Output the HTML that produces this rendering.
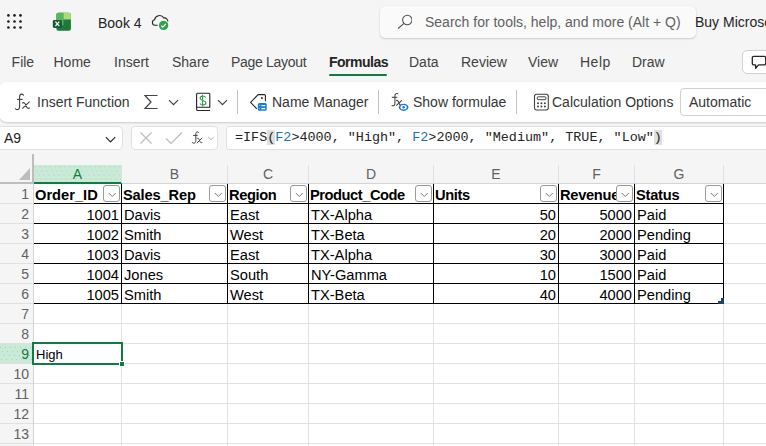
<!DOCTYPE html>
<html><head><meta charset="utf-8">
<style>
*{box-sizing:border-box;margin:0;padding:0}
html,body{width:766px;height:446px;overflow:hidden;background:#f5f5f5;font-family:"Liberation Sans",sans-serif;color:#242424}
.a{position:absolute;white-space:nowrap}
.t14{font-size:14px}
.tab{position:absolute;top:54.4px;font-size:14px;color:#424242;line-height:16px}
.rib{position:absolute;left:-1px;top:82px;width:800px;height:40px;background:#fff;border-radius:8px;box-shadow:0 1px 2px rgba(0,0,0,0.18)}
.rl{position:absolute;top:94.3px;font-size:14px;color:#363636;line-height:16px}
.sep{position:absolute;top:90px;width:1px;height:24px;background:#c2c2c2}
.box{position:absolute;background:#fff;border:1px solid #e0e0e0;border-radius:4px}
.hdr{position:absolute;top:165px;height:18px;font-size:14px;color:#616161;text-align:center;line-height:18px}
.rh{position:absolute;left:0;width:29px;height:20px;font-size:14px;color:#616161;text-align:right;line-height:20px}
.c{position:absolute;height:20px;font-size:14.67px;line-height:20px;color:#000;padding:0 3px}
.b{font-weight:bold}
.dots{background:#caead8}
.r{text-align:right}
.fb{position:absolute;width:17px;height:17px;border:1px solid #9a9a9a;border-radius:3px;background:#fff}
.fb svg{position:absolute;left:3.5px;top:5.5px}
</style></head><body>

<!-- top bar -->
<svg class="a" style="left:6px;top:13px" width="18" height="18" viewBox="0 0 18 18">
<g fill="#1a1a1a"><circle cx="2.4" cy="2.4" r="1.3"/><circle cx="8.5" cy="2.4" r="1.3"/><circle cx="14.5" cy="2.4" r="1.3"/>
<circle cx="2.4" cy="8.5" r="1.3"/><circle cx="8.5" cy="8.5" r="1.3"/><circle cx="14.5" cy="8.5" r="1.3"/>
<circle cx="2.4" cy="14.5" r="1.3"/><circle cx="8.5" cy="14.5" r="1.3"/><circle cx="14.5" cy="14.5" r="1.3"/></g></svg>

<svg class="a" style="left:52px;top:12px" width="20" height="20" viewBox="0 0 20 20">
<rect x="4.4" y="0.8" width="14.5" height="18" rx="2" fill="#1e7a3c"/>
<path d="M6.4 0.8h5v12.5h-7v-10.5a2 2 0 0 1 2-2z" fill="#55b85a"/>
<path d="M11.4 0.8h5.5a2 2 0 0 1 2 2v4.7h-7.5z" fill="#a8dd7c"/>
<rect x="0.8" y="7.9" width="9.2" height="8" rx="1.3" fill="#125e32"/>
<path d="M3.4 9.7l3.9 4.4M7.3 9.7l-3.9 4.4" stroke="#fff" stroke-width="1.2"/>
</svg>

<div class="a" style="left:98px;top:15px;font-size:14px;line-height:16px;color:#242424">Book 4</div>
<svg class="a" style="left:148px;top:10px" width="24" height="24" viewBox="0 0 24 24">
<path d="M9.7 15.3H6.9A2.8 2.8 0 0 1 6.5 9.8A5.1 5.1 0 0 1 15.8 7.9A3.6 3.6 0 0 1 19.9 11.6" fill="none" stroke="#242424" stroke-width="1.1"/>
<circle cx="15.6" cy="15.4" r="4.7" fill="#2ea44f"/>
<path d="M13.3 15.6l1.5 1.5 3-3.1" fill="none" stroke="#fff" stroke-width="1.1"/>
</svg>

<div class="a" style="left:380px;top:6px;width:316px;height:32px;background:#fafafa;border-radius:5px;box-shadow:0 1px 2px rgba(0,0,0,0.16),0 0 1px rgba(0,0,0,0.1)"></div>
<svg class="a" style="left:396px;top:13px" width="16" height="17" viewBox="0 0 16 17">
<circle cx="11.3" cy="7" r="4.7" fill="none" stroke="#505050" stroke-width="1.05"/>
<path d="M8 10.3L2.1 15.5" stroke="#505050" stroke-width="1.05"/>
</svg>
<div class="a" style="left:425px;top:14px;font-size:14px;line-height:16px;color:#616161">Search for tools, help, and more (Alt + Q)</div>
<div class="a" style="left:695px;top:14px;font-size:14px;line-height:16px;color:#242424">Buy Microsoft 365</div>

<!-- tabs -->
<div class="tab" style="left:11.6px">File</div>
<div class="tab" style="left:53.5px">Home</div>
<div class="tab" style="left:114px">Insert</div>
<div class="tab" style="left:172px">Share</div>
<div class="tab" style="left:231px;letter-spacing:-0.3px">Page Layout</div>
<div class="tab" style="left:329px;font-weight:bold;color:#242424;letter-spacing:-0.5px">Formulas</div>
<div class="a" style="left:329px;top:74px;width:58px;height:2px;background:#107c41;border-radius:1px"></div>
<div class="tab" style="left:409px">Data</div>
<div class="tab" style="left:461px">Review</div>
<div class="tab" style="left:528px">View</div>
<div class="tab" style="left:580px;letter-spacing:0.5px">Help</div>
<div class="tab" style="left:632px">Draw</div>
<div class="a" style="left:742px;top:50px;width:40px;height:24px;background:#fff;border:1px solid #d1d1d1;border-radius:5px"></div>
<svg class="a" style="left:751px;top:55px" width="16" height="15" viewBox="0 0 16 15">
<path d="M2.8 1.3h10.4a1.5 1.5 0 0 1 1.5 1.5v5.6a1.5 1.5 0 0 1-1.5 1.5H7.6L4.6 13.2V9.9H2.8A1.5 1.5 0 0 1 1.3 8.4V2.8A1.5 1.5 0 0 1 2.8 1.3z" fill="none" stroke="#242424" stroke-width="1.3" stroke-linejoin="round"/>
</svg>

<!-- ribbon -->
<div class="rib"></div>
<svg class="a" style="left:10px;top:88px" width="26" height="26" viewBox="0 0 26 26">
<path d="M13.7 7.6C13.4 6.5 12.7 6.1 11.8 6.1C10.3 6.1 9.6 7.2 9.6 9V18.2C9.6 20.5 8.6 21.6 7.1 21.6C6.1 21.6 5.5 21.1 5.2 20.4" fill="none" stroke="#424242" stroke-width="1.1"/>
<path d="M7 11.4H12.6" stroke="#424242" stroke-width="1.1"/>
<path d="M12.2 15.2C13.6 14.2 14.6 14.6 15.4 16.3L16.8 19.2C17.4 20.4 18.4 20.7 19.8 19.8M19.6 13.6L12.2 20.6" fill="none" stroke="#424242" stroke-width="1.1"/>
</svg>
<div class="rl" style="left:37px">Insert Function</div>
<svg class="a" style="left:143px;top:94px" width="17" height="16" viewBox="0 0 17 16">
<path d="M14.5 1.5H2l6 6.5L2 14.5h12.5" fill="none" stroke="#424242" stroke-width="1.2"/>
</svg>
<svg class="a" style="left:168px;top:98px" width="11" height="8" viewBox="0 0 11 8"><path d="M1 2.1l4.5 4.6 4.5-4.6" fill="none" stroke="#424242" stroke-width="1.2"/></svg>
<svg class="a" style="left:190px;top:88px" width="24" height="26" viewBox="0 0 24 26">
<path d="M6.6 19.6V6.3A1 1 0 0 1 7.6 5.3H18.8A1 1 0 0 1 19.8 6.3V19.3H6.6M6.6 19.3V21.2A1.3 1.3 0 0 0 7.9 22.5H20.1" fill="none" stroke="#242424" stroke-width="1.1"/>
<path d="M15.7 9.5C15.2 8.5 14.2 8 12.9 8C11.2 8 10.1 8.9 10.1 10.2C10.1 13 15.9 12 15.9 14.8C15.9 16.1 14.7 17 12.9 17C11.6 17 10.5 16.5 9.9 15.5M12.6 6.7V18.4" fill="none" stroke="#2ea043" stroke-width="1.1"/>
</svg>
<svg class="a" style="left:217px;top:98px" width="11" height="8" viewBox="0 0 11 8"><path d="M1 2.1l4.5 4.6 4.5-4.6" fill="none" stroke="#424242" stroke-width="1.2"/></svg>
<div class="sep" style="left:237px"></div>
<svg class="a" style="left:246px;top:90px" width="24" height="24" viewBox="0 0 24 24">
<path d="M10.8 18.8L4.6 12.4L12.1 4.6H18.2A1.2 1.2 0 0 1 19.4 5.8V11.3" fill="none" stroke="#242424" stroke-width="1.1" stroke-linejoin="round"/>
<circle cx="15.9" cy="8.1" r="1" fill="#242424"/>
<rect x="11.8" y="12.9" width="8.9" height="7.8" rx="1.5" fill="#1a7fd4"/>
<path d="M15.5 15.6H19.2M15.5 18.6H19.2" stroke="#fff" stroke-width="1.2"/>
<circle cx="13.7" cy="15.6" r="0.55" fill="#8cc1ec"/><circle cx="13.7" cy="18.6" r="0.55" fill="#8cc1ec"/>
</svg>
<div class="rl" style="left:272px">Name Manager</div>
<div class="sep" style="left:378px"></div>
<svg class="a" style="left:386px;top:88px" width="26" height="26" viewBox="0 0 26 26">
<path d="M12.3 5.8C10 5 8.9 6 8.9 8.2V15.6C8.9 17.6 7.6 18.2 5.6 17.6" fill="none" stroke="#424242" stroke-width="1.05"/>
<path d="M5.8 9.3H11.3" stroke="#424242" stroke-width="1.05"/>
<path d="M10 12.4C11.4 12 12.1 12.6 12.7 14.2L13.4 16C13.9 17.3 14.6 17.6 15.8 17.3M15.8 12.3L10.2 17.6" fill="none" stroke="#424242" stroke-width="1.05"/>
<ellipse cx="17.6" cy="19.3" rx="4.8" ry="3.6" fill="#1d78d4"/>
<ellipse cx="17.6" cy="19.3" rx="3.1" ry="2.2" fill="#fff"/>
<circle cx="17.6" cy="19.3" r="1.3" fill="#1d78d4"/>
</svg>
<div class="rl" style="left:413px">Show formulae</div>
<div class="sep" style="left:516px"></div>
<svg class="a" style="left:533px;top:93px" width="17" height="18" viewBox="0 0 17 18">
<rect x="1.5" y="1.2" width="13.8" height="15.8" rx="2.2" fill="none" stroke="#424242" stroke-width="1.1"/>
<rect x="4.3" y="3.8" width="8.6" height="2.9" rx="0.8" fill="none" stroke="#424242" stroke-width="1"/>
<g fill="#424242"><circle cx="5" cy="10.2" r="1"/><circle cx="8.4" cy="10.2" r="1"/><circle cx="11.9" cy="10.2" r="1"/>
<circle cx="5" cy="13.6" r="1"/><circle cx="8.4" cy="13.6" r="1"/><circle cx="11.9" cy="13.6" r="1"/></g>
</svg>
<div class="rl" style="left:552px">Calculation Options</div>
<div class="a" style="left:680px;top:88px;width:100px;height:28px;background:#fff;border:1px solid #d1d1d1;border-radius:4px"></div>
<div class="rl" style="left:689px">Automatic</div>

<!-- formula bar -->
<div class="box" style="left:-3px;top:126px;width:126px;height:24px;border-radius:5px"></div>
<div class="a" style="left:4px;top:130px;font-size:14px;line-height:16px;color:#242424">A9</div>
<svg class="a" style="left:104px;top:135px" width="13" height="9" viewBox="0 0 13 9"><path d="M1.8 2.2l4.7 4.7 4.7-4.7" fill="none" stroke="#242424" stroke-width="1.1"/></svg>
<div class="box" style="left:131px;top:126px;width:87px;height:24px"></div>
<svg class="a" style="left:139px;top:131px" width="14" height="14" viewBox="0 0 14 14"><path d="M1.5 1.5l11 11M12.5 1.5l-11 11" stroke="#bdbdbd" stroke-width="1.2"/></svg>
<svg class="a" style="left:165px;top:131px" width="18" height="14" viewBox="0 0 18 14"><path d="M1 7.5l5 5L17 1.5" fill="none" stroke="#bdbdbd" stroke-width="1.2"/></svg>
<svg class="a" style="left:186px;top:126px" width="32" height="24" viewBox="0 0 32 24">
<path d="M12.9 6.9C12.6 6.2 12 5.9 11.3 5.9C10.3 5.9 9.8 6.7 9.8 8V14.5C9.8 16.3 9 17.2 7.8 17.2C7 17.2 6.4 16.8 6 16.1" fill="none" stroke="#424242" stroke-width="1"/>
<path d="M7 9.4H11.7" stroke="#424242" stroke-width="1"/>
<path d="M10.8 12.5C11.8 11.9 12.5 12.1 13 13.3L14 15.6C14.4 16.6 15.2 17 16.3 16.5M16.1 12L10.8 17.2" fill="none" stroke="#424242" stroke-width="1"/>
<path d="M22.2 11L25 13.7L27.8 11" fill="none" stroke="#b0b0b0" stroke-width="1"/>
</svg>
<div class="box" style="left:226px;top:126px;width:600px;height:24px;border-radius:3px"></div>
<div class="a" style="left:235px;top:130px;font-family:'Liberation Mono',monospace;font-size:13.43px;line-height:15px;color:#242424"><span>=IFS</span><span style="background:#e0e0e0">(</span><span style="color:#1b6ec2">F2</span>&gt;4000, "High", <span style="color:#1b6ec2">F2</span>&gt;2000, "Medium", TRUE, "Low"<span style="background:#e0e0e0">)</span></div>

<!-- grid -->
<div class="a" style="left:0;top:154px;width:766px;height:292px;background:#f5f5f5"></div>
<div class="a" style="left:34px;top:184px;width:732px;height:262px;background:#fff"></div>
<!-- corner triangle -->
<svg class="a" style="left:18px;top:167px" width="13" height="14" viewBox="0 0 13 14"><path d="M12 1V13H1z" fill="#bdbdbd"/></svg>
<div class="a" style="left:32px;top:154px;width:2px;height:30px;background:#bdbdbd"></div>
<div class="a" style="left:0;top:182px;width:34px;height:2px;background:#bdbdbd"></div>
<div class="a" style="left:33px;top:184px;width:1px;height:262px;background:#d4d4d4"></div>
<div class="a" style="left:34px;top:183px;width:732px;height:1px;background:#d4d4d4"></div>
<!-- selected col A header -->
<div class="a dots" style="left:34px;top:165px;width:88px;height:17px"></div>
<svg class="a" style="left:34px;top:165px" width="88" height="17"><defs><pattern id="dp" x="0" y="0" width="5" height="20" patternUnits="userSpaceOnUse">
<g fill="rgba(60,90,70,0.2)"><rect x="0" y="1" width="1" height="1"/><rect x="2" y="5" width="1" height="1"/><rect x="4" y="9" width="1" height="1"/><rect x="1" y="13" width="1" height="1"/><rect x="3" y="17" width="1" height="1"/></g></pattern></defs>
<rect x="0" y="0" width="88" height="17" fill="url(#dp)" transform="translate(0.5,0.5)"/></svg>
<div class="a" style="left:34px;top:182px;width:88px;height:2px;background:#107c41"></div>
<!-- header separators -->
<div class="a" style="left:121px;top:165px;width:1px;height:18px;background:#e0e0e0"></div>
<div class="a" style="left:227px;top:165px;width:1px;height:18px;background:#e0e0e0"></div>
<div class="a" style="left:308px;top:165px;width:1px;height:18px;background:#e0e0e0"></div>
<div class="a" style="left:433px;top:165px;width:1px;height:18px;background:#e0e0e0"></div>
<div class="a" style="left:558px;top:165px;width:1px;height:18px;background:#e0e0e0"></div>
<div class="a" style="left:634px;top:165px;width:1px;height:18px;background:#e0e0e0"></div>
<div class="a" style="left:723px;top:165px;width:1px;height:18px;background:#e0e0e0"></div>
<div class="hdr" style="left:34px;width:87px;color:#107c41">A</div>
<div class="hdr" style="left:122px;width:105px;color:#616161">B</div>
<div class="hdr" style="left:228px;width:80px;color:#616161">C</div>
<div class="hdr" style="left:309px;width:124px;color:#616161">D</div>
<div class="hdr" style="left:434px;width:124px;color:#616161">E</div>
<div class="hdr" style="left:559px;width:75px;color:#616161">F</div>
<div class="hdr" style="left:635px;width:88px;color:#616161">G</div>
<div class="hdr" style="left:724px;width:176px;color:#616161">H</div>
<div class="rh" style="top:184px;color:#616161">1</div>
<div class="a" style="left:0;top:203px;width:33px;height:1px;background:#e0e0e0"></div>
<div class="rh" style="top:204px;color:#616161">2</div>
<div class="a" style="left:0;top:223px;width:33px;height:1px;background:#e0e0e0"></div>
<div class="rh" style="top:224px;color:#616161">3</div>
<div class="a" style="left:0;top:243px;width:33px;height:1px;background:#e0e0e0"></div>
<div class="rh" style="top:244px;color:#616161">4</div>
<div class="a" style="left:0;top:263px;width:33px;height:1px;background:#e0e0e0"></div>
<div class="rh" style="top:264px;color:#616161">5</div>
<div class="a" style="left:0;top:283px;width:33px;height:1px;background:#e0e0e0"></div>
<div class="rh" style="top:284px;color:#616161">6</div>
<div class="a" style="left:0;top:303px;width:33px;height:1px;background:#e0e0e0"></div>
<div class="rh" style="top:304px;color:#616161">7</div>
<div class="a" style="left:0;top:323px;width:33px;height:1px;background:#e0e0e0"></div>
<div class="rh" style="top:324px;color:#616161">8</div>
<div class="a" style="left:0;top:343px;width:33px;height:1px;background:#e0e0e0"></div>
<div class="a dots" style="left:0;top:344px;width:32px;height:19px"></div>
<svg class="a" style="left:0;top:344px" width="32" height="19"><rect x="0" y="0" width="32" height="19" fill="url(#dp)" transform="translate(0,2)"/></svg>
<div class="rh" style="top:344px;color:#107c41">9</div>
<div class="a" style="left:0;top:363px;width:33px;height:1px;background:#e0e0e0"></div>
<div class="rh" style="top:364px;color:#616161">10</div>
<div class="a" style="left:0;top:383px;width:33px;height:1px;background:#e0e0e0"></div>
<div class="rh" style="top:384px;color:#616161">11</div>
<div class="a" style="left:0;top:403px;width:33px;height:1px;background:#e0e0e0"></div>
<div class="rh" style="top:404px;color:#616161">12</div>
<div class="a" style="left:0;top:423px;width:33px;height:1px;background:#e0e0e0"></div>
<div class="rh" style="top:424px;color:#616161">13</div>
<div class="a" style="left:0;top:443px;width:33px;height:1px;background:#e0e0e0"></div>
<div class="rh" style="top:444px;color:#616161">14</div>
<div class="a" style="left:0;top:463px;width:33px;height:1px;background:#e0e0e0"></div>
<div class="a" style="left:34px;top:203px;width:732px;height:1px;background:#e1e1e1"></div>
<div class="a" style="left:34px;top:223px;width:732px;height:1px;background:#e1e1e1"></div>
<div class="a" style="left:34px;top:243px;width:732px;height:1px;background:#e1e1e1"></div>
<div class="a" style="left:34px;top:263px;width:732px;height:1px;background:#e1e1e1"></div>
<div class="a" style="left:34px;top:283px;width:732px;height:1px;background:#e1e1e1"></div>
<div class="a" style="left:34px;top:303px;width:732px;height:1px;background:#e1e1e1"></div>
<div class="a" style="left:34px;top:323px;width:732px;height:1px;background:#e1e1e1"></div>
<div class="a" style="left:34px;top:343px;width:732px;height:1px;background:#e1e1e1"></div>
<div class="a" style="left:34px;top:363px;width:732px;height:1px;background:#e1e1e1"></div>
<div class="a" style="left:34px;top:383px;width:732px;height:1px;background:#e1e1e1"></div>
<div class="a" style="left:34px;top:403px;width:732px;height:1px;background:#e1e1e1"></div>
<div class="a" style="left:34px;top:423px;width:732px;height:1px;background:#e1e1e1"></div>
<div class="a" style="left:34px;top:443px;width:732px;height:1px;background:#e1e1e1"></div>
<div class="a" style="left:34px;top:463px;width:732px;height:1px;background:#e1e1e1"></div>
<div class="a" style="left:121px;top:184px;width:1px;height:262px;background:#e1e1e1"></div>
<div class="a" style="left:227px;top:184px;width:1px;height:262px;background:#e1e1e1"></div>
<div class="a" style="left:308px;top:184px;width:1px;height:262px;background:#e1e1e1"></div>
<div class="a" style="left:433px;top:184px;width:1px;height:262px;background:#e1e1e1"></div>
<div class="a" style="left:558px;top:184px;width:1px;height:262px;background:#e1e1e1"></div>
<div class="a" style="left:634px;top:184px;width:1px;height:262px;background:#e1e1e1"></div>
<div class="a" style="left:723px;top:184px;width:1px;height:262px;background:#e1e1e1"></div>
<div class="a" style="left:34px;top:203px;width:690px;height:1px;background:#000"></div>
<div class="a" style="left:34px;top:223px;width:690px;height:1px;background:#000"></div>
<div class="a" style="left:34px;top:243px;width:690px;height:1px;background:#000"></div>
<div class="a" style="left:34px;top:263px;width:690px;height:1px;background:#000"></div>
<div class="a" style="left:34px;top:283px;width:690px;height:1px;background:#000"></div>
<div class="a" style="left:34px;top:303px;width:690px;height:1px;background:#000"></div>
<div class="a" style="left:121px;top:184px;width:1px;height:120px;background:#000"></div>
<div class="a" style="left:227px;top:184px;width:1px;height:120px;background:#000"></div>
<div class="a" style="left:308px;top:184px;width:1px;height:120px;background:#000"></div>
<div class="a" style="left:433px;top:184px;width:1px;height:120px;background:#000"></div>
<div class="a" style="left:558px;top:184px;width:1px;height:120px;background:#000"></div>
<div class="a" style="left:634px;top:184px;width:1px;height:120px;background:#000"></div>
<div class="a" style="left:723px;top:184px;width:1px;height:120px;background:#000"></div>
<div class="c b" style="left:34px;top:185px;width:85px;overflow:hidden;padding:0 1px;letter-spacing:0px">Order_ID</div>
<div class="fb" style="left:103px;top:185px"><svg width="9" height="6" viewBox="0 0 9 6"><path d="M0.8 1l3.5 3.5L7.8 1" fill="none" stroke="#7a7a7a" stroke-width="1"/></svg></div>
<div class="c b" style="left:122px;top:185px;width:103px;overflow:hidden;padding:0 1px;letter-spacing:-0.16px">Sales_Rep</div>
<div class="fb" style="left:209px;top:185px"><svg width="9" height="6" viewBox="0 0 9 6"><path d="M0.8 1l3.5 3.5L7.8 1" fill="none" stroke="#7a7a7a" stroke-width="1"/></svg></div>
<div class="c b" style="left:228px;top:185px;width:78px;overflow:hidden;padding:0 1px;letter-spacing:-0.4px">Region</div>
<div class="fb" style="left:290px;top:185px"><svg width="9" height="6" viewBox="0 0 9 6"><path d="M0.8 1l3.5 3.5L7.8 1" fill="none" stroke="#7a7a7a" stroke-width="1"/></svg></div>
<div class="c b" style="left:309px;top:185px;width:122px;overflow:hidden;padding:0 1px;letter-spacing:-0.45px">Product_Code</div>
<div class="fb" style="left:415px;top:185px"><svg width="9" height="6" viewBox="0 0 9 6"><path d="M0.8 1l3.5 3.5L7.8 1" fill="none" stroke="#7a7a7a" stroke-width="1"/></svg></div>
<div class="c b" style="left:434px;top:185px;width:122px;overflow:hidden;padding:0 1px;letter-spacing:-0.35px">Units</div>
<div class="fb" style="left:540px;top:185px"><svg width="9" height="6" viewBox="0 0 9 6"><path d="M0.8 1l3.5 3.5L7.8 1" fill="none" stroke="#7a7a7a" stroke-width="1"/></svg></div>
<div class="c b" style="left:559px;top:185px;width:73px;overflow:hidden;padding:0 1px;letter-spacing:-0.3px">Revenue</div>
<div class="fb" style="left:616px;top:185px"><svg width="9" height="6" viewBox="0 0 9 6"><path d="M0.8 1l3.5 3.5L7.8 1" fill="none" stroke="#7a7a7a" stroke-width="1"/></svg></div>
<div class="c b" style="left:635px;top:185px;width:86px;overflow:hidden;padding:0 1px;letter-spacing:-0.24px">Status</div>
<div class="fb" style="left:705px;top:185px"><svg width="9" height="6" viewBox="0 0 9 6"><path d="M0.8 1l3.5 3.5L7.8 1" fill="none" stroke="#7a7a7a" stroke-width="1"/></svg></div>
<div class="c r" style="left:34px;top:205px;width:87px;padding:0 2px">1001</div>
<div class="c" style="left:122px;top:205px;width:105px;padding:0 2px">Davis</div>
<div class="c" style="left:228px;top:205px;width:80px;padding:0 2px">East</div>
<div class="c" style="left:309px;top:205px;width:124px;padding:0 2px">TX-Alpha</div>
<div class="c r" style="left:434px;top:205px;width:124px;padding:0 2px">50</div>
<div class="c r" style="left:559px;top:205px;width:75px;padding:0 2px">5000</div>
<div class="c" style="left:635px;top:205px;width:88px;padding:0 2px">Paid</div>
<div class="c r" style="left:34px;top:225px;width:87px;padding:0 2px">1002</div>
<div class="c" style="left:122px;top:225px;width:105px;padding:0 2px">Smith</div>
<div class="c" style="left:228px;top:225px;width:80px;padding:0 2px">West</div>
<div class="c" style="left:309px;top:225px;width:124px;padding:0 2px">TX-Beta</div>
<div class="c r" style="left:434px;top:225px;width:124px;padding:0 2px">20</div>
<div class="c r" style="left:559px;top:225px;width:75px;padding:0 2px">2000</div>
<div class="c" style="left:635px;top:225px;width:88px;padding:0 2px">Pending</div>
<div class="c r" style="left:34px;top:245px;width:87px;padding:0 2px">1003</div>
<div class="c" style="left:122px;top:245px;width:105px;padding:0 2px">Davis</div>
<div class="c" style="left:228px;top:245px;width:80px;padding:0 2px">East</div>
<div class="c" style="left:309px;top:245px;width:124px;padding:0 2px">TX-Alpha</div>
<div class="c r" style="left:434px;top:245px;width:124px;padding:0 2px">30</div>
<div class="c r" style="left:559px;top:245px;width:75px;padding:0 2px">3000</div>
<div class="c" style="left:635px;top:245px;width:88px;padding:0 2px">Paid</div>
<div class="c r" style="left:34px;top:265px;width:87px;padding:0 2px">1004</div>
<div class="c" style="left:122px;top:265px;width:105px;padding:0 2px">Jones</div>
<div class="c" style="left:228px;top:265px;width:80px;padding:0 2px">South</div>
<div class="c" style="left:309px;top:265px;width:124px;padding:0 2px">NY-Gamma</div>
<div class="c r" style="left:434px;top:265px;width:124px;padding:0 2px">10</div>
<div class="c r" style="left:559px;top:265px;width:75px;padding:0 2px">1500</div>
<div class="c" style="left:635px;top:265px;width:88px;padding:0 2px">Paid</div>
<div class="c r" style="left:34px;top:285px;width:87px;padding:0 2px">1005</div>
<div class="c" style="left:122px;top:285px;width:105px;padding:0 2px">Smith</div>
<div class="c" style="left:228px;top:285px;width:80px;padding:0 2px">West</div>
<div class="c" style="left:309px;top:285px;width:124px;padding:0 2px">TX-Beta</div>
<div class="c r" style="left:434px;top:285px;width:124px;padding:0 2px">40</div>
<div class="c r" style="left:559px;top:285px;width:75px;padding:0 2px">4000</div>
<div class="c" style="left:635px;top:285px;width:88px;padding:0 2px">Pending</div>
<div class="a" style="left:721px;top:298px;width:3px;height:6px;background:#1f3f7a"></div>
<div class="a" style="left:718px;top:301px;width:6px;height:3px;background:#1f3f7a"></div>
<div class="a" style="left:32px;top:342px;width:91px;height:23px;border:2px solid #107c41"></div>
<div class="a" style="left:119px;top:361px;width:6px;height:6px;background:#107c41;border:1px solid #fff"></div>
<div class="c" style="left:34px;top:345px;width:87px;padding:0 2px;font-size:13px">High</div>
</body></html>
